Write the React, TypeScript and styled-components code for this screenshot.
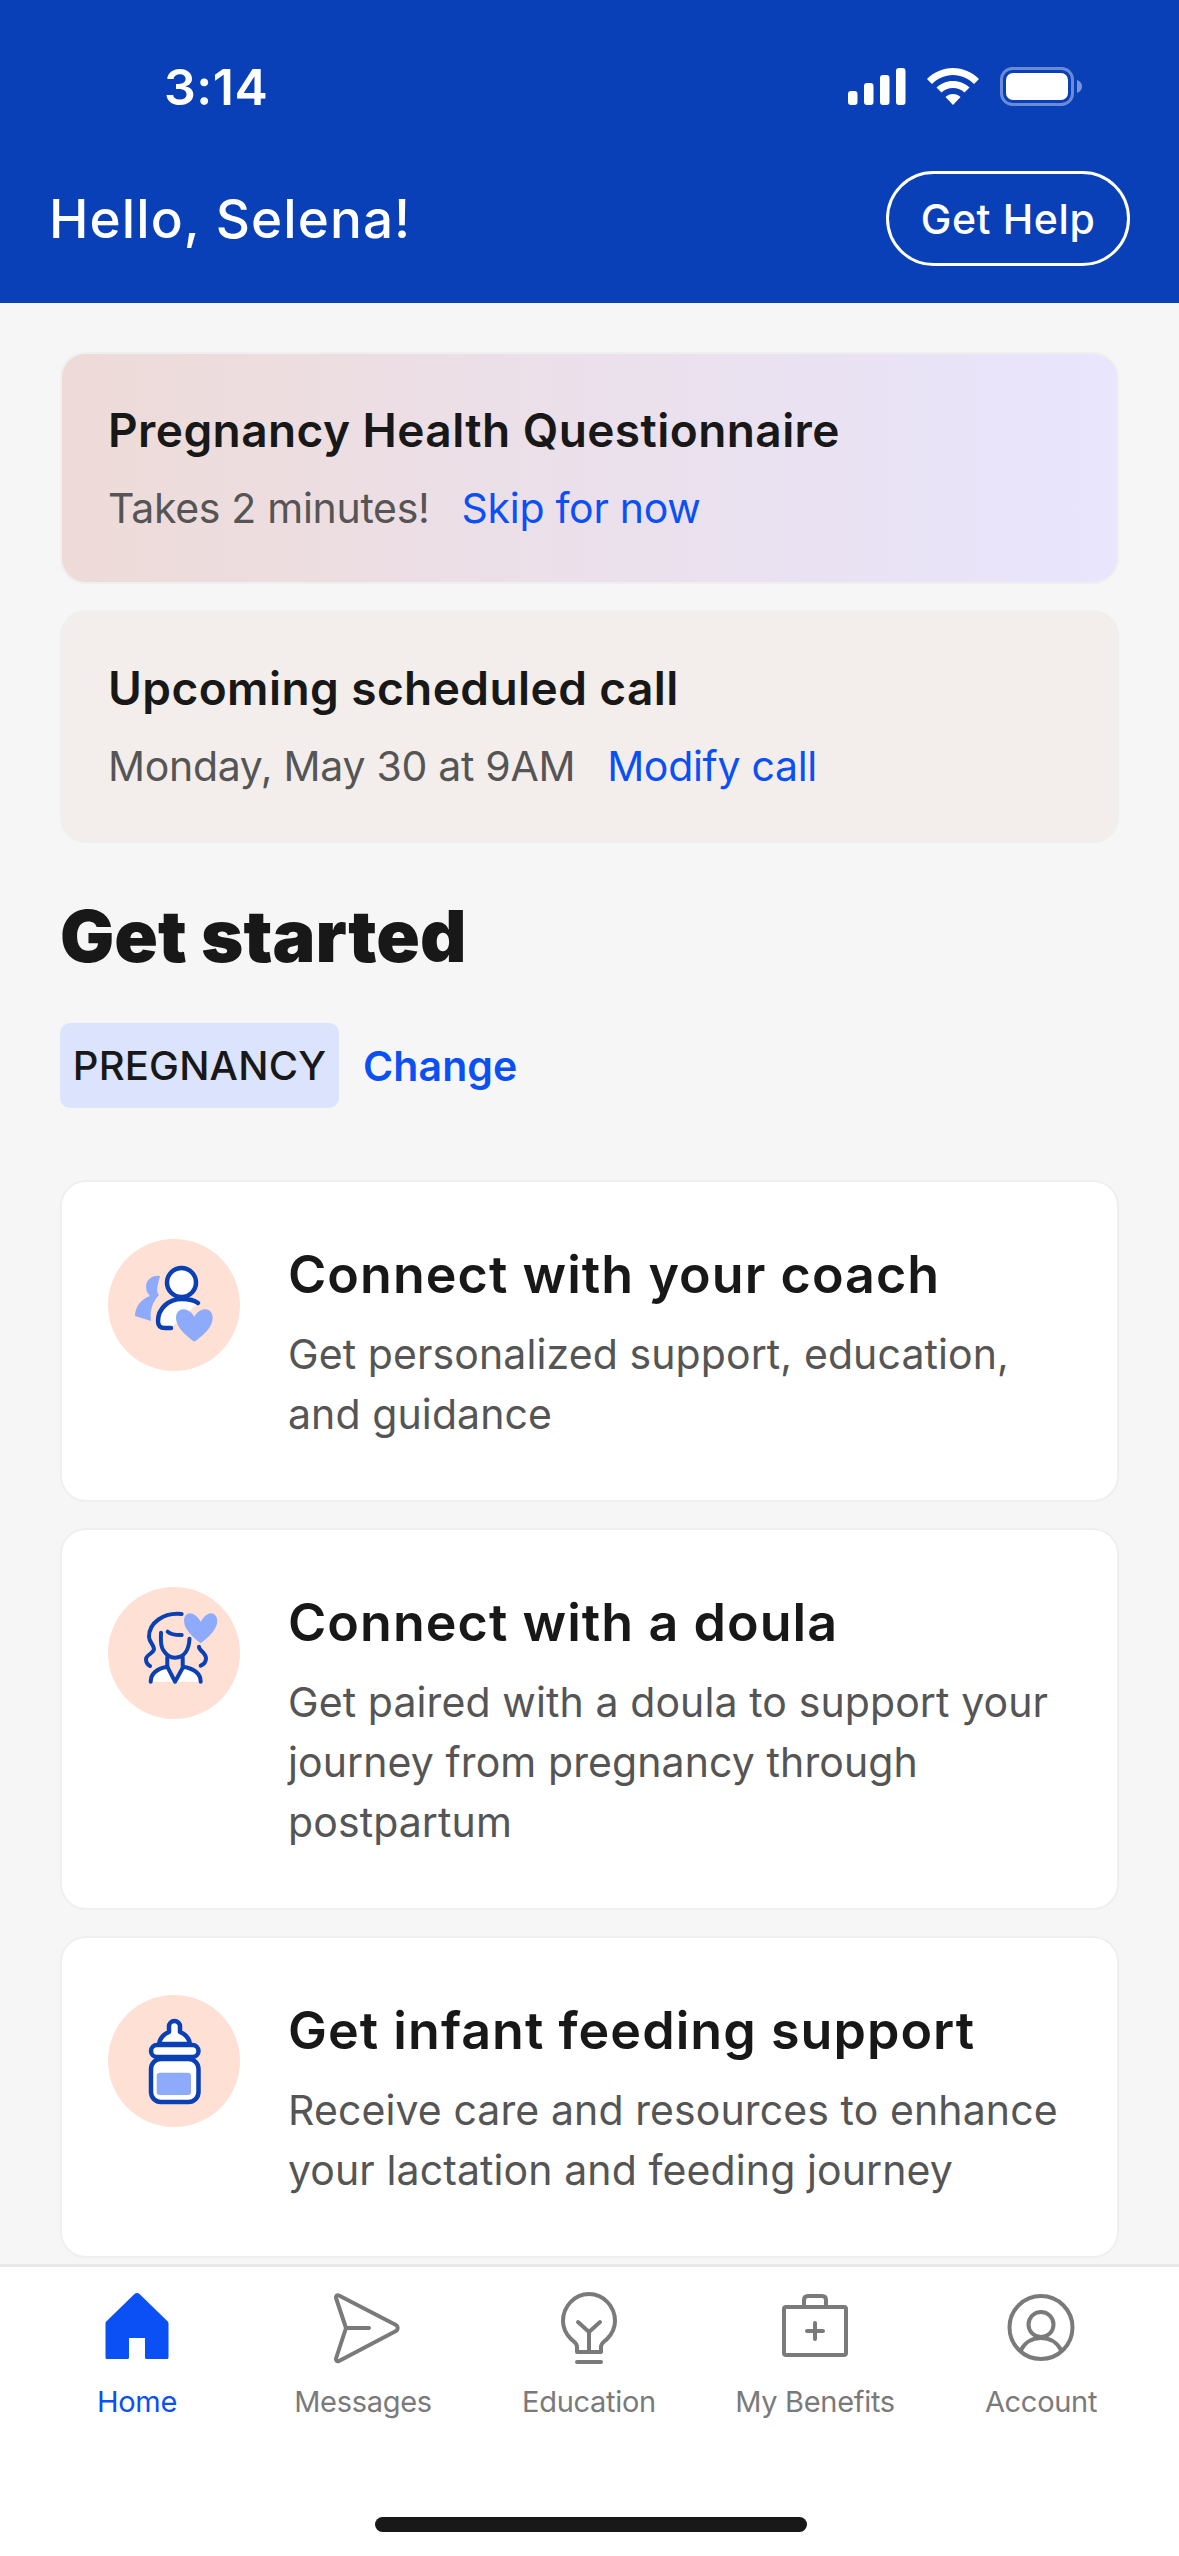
import React from "react";
import styled, { createGlobalStyle } from "styled-components";

const Global = createGlobalStyle`
  html, body { margin: 0; padding: 0; background: #f6f6f6; }
  * { box-sizing: border-box; }
  body { font-family: "Inter", "Noto Sans", "Liberation Sans", sans-serif; }
`;

const Page = styled.div`
  width: 1179px;
  height: 2556px;
  display: flex;
  flex-direction: column;
  overflow: hidden;
  background: #f6f6f6;
`;

const Header = styled.header`
  height: 303px;
  flex: none;
  background: #0940b8;
  color: #fff;
  display: flex;
  flex-direction: column;
`;

const StatusBar = styled.div`
  height: 171px;
  padding: 62px 96px 0 164px;
  display: flex;
  justify-content: space-between;
  align-items: flex-start;
`;

const Clock = styled.span`
  font-size: 50px;
  line-height: 50px;
  font-weight: 600;
  letter-spacing: 0.5px;
`;

const StatusIcons = styled.div`
  display: flex;
  align-items: center;
  padding-top: 5px;
  gap: 21px;
`;

const Greeting = styled.div`
  display: flex;
  justify-content: space-between;
  align-items: center;
  padding: 0 49px 0 49px;
`;

const Hello = styled.h1`
  margin: 0;
  font-size: 53px;
  font-weight: 500;
  letter-spacing: 1.1px;
`;

const HelpButton = styled.button`
  width: 244px;
  height: 95px;
  border-radius: 48px;
  border: 3px solid #fff;
  background: transparent;
  color: #fff;
  font: 500 41px "Inter", sans-serif;
  letter-spacing: 0.6px;
  padding: 0;
`;

const Main = styled.main`
  flex: 1;
  min-height: 0;
  padding: 49px 60px 0;
  display: flex;
  flex-direction: column;
`;

const Banner = styled.section<{ $tone: "gradient" | "plain" }>`
  height: ${(p) => (p.$tone === "gradient" ? "232px" : "233px")};
  padding: 46px 46px 0;
  border: 2px solid #efefef;
  border-radius: 26px;
  margin-bottom: 26px;
  background: ${(p) =>
    p.$tone === "gradient"
      ? "linear-gradient(90deg, #eedbd8 0%, #e8e5fd 100%)"
      : "#f3eeeb"};
`;

const BannerTitle = styled.div`
  font-size: 46px;
  line-height: 60px;
  font-weight: 600;
  color: #181818;
  letter-spacing: 0.43px;
`;

const BannerLine = styled.div`
  margin-top: 18px;
  display: flex;
  gap: 32px;
  font-size: 41px;
  line-height: 60px;
  letter-spacing: -0.3px;
  color: #555;
`;

const LinkText = styled.span`
  color: #0a50f5;
`;

const Heading = styled.h2`
  margin: 22px 0 0;
  font-size: 72px;
  line-height: 90px;
  font-weight: 900;
  color: #181818;
  letter-spacing: 0;
`;

const TagRow = styled.div`
  margin-top: 42px;
  display: flex;
  align-items: center;
  gap: 24px;
`;

const Tag = styled.span`
  width: 279px;
  height: 85px;
  border-radius: 10px;
  background: #dbe3fd;
  color: #181818;
  font-size: 40px;
  font-weight: 500;
  display: flex;
  align-items: center;
  justify-content: center;
  letter-spacing: 0.2px;
`;

const ChangeLink = styled.span`
  color: #0a50f5;
  font-size: 41px;
  font-weight: 600;
  letter-spacing: 0.1px;
`;

const Cards = styled.div`
  margin-top: 72px;
  display: flex;
  flex-direction: column;
  gap: 26px;
`;

const Card = styled.article`
  background: #fff;
  border: 2px solid #efefef;
  border-radius: 26px;
  padding: 56px 46px 56px;
  display: flex;
  gap: 48px;
`;

const IconDisc = styled.svg`
  width: 132px;
  height: 132px;
  flex: none;
  margin-top: 1px;
`;

const CardText = styled.div`
  flex: 1;
  min-width: 0;
`;

const CardTitle = styled.div`
  font-size: 52px;
  line-height: 74px;
  font-weight: 600;
  color: #181818;
  letter-spacing: 1.05px;
  margin-bottom: 12px;
`;

const CardDesc = styled.div`
  font-size: 41px;
  line-height: 60px;
  color: #555;
  letter-spacing: 0.1px;
`;

const TabBar = styled.nav`
  flex: none;
  height: 292px;
  background: #fff;
  border-top: 3px solid #e8e8e8;
  display: flex;
  flex-direction: column;
`;

const Tabs = styled.div`
  display: grid;
  grid-template-columns: repeat(5, 226px);
  padding: 25px 24px 0;
`;

const Tab = styled.div<{ $active?: boolean }>`
  display: flex;
  flex-direction: column;
  align-items: center;
  color: ${(p) => (p.$active ? "#0a50f5" : "#7a7a7a")};
  font-size: 29px;
  letter-spacing: -0.3px;
`;

const TabIcon = styled.svg`
  width: 80px;
  height: 80px;
  display: block;
`;

const TabLabel = styled.span`
  margin-top: 12px;
  line-height: 36px;
`;

const HomeIndicator = styled.div`
  width: 432px;
  height: 15px;
  margin: 97px 0 0 375px;
  border-radius: 8px;
  background: #181818;
`;

const Disc = () => <circle cx="66" cy="66" r="66" fill="#ffe0d4" />;

const DARK = "#0a40b4";
const LIGHT = "#8eabfb";

const CoachIcon = () => (
  <IconDisc viewBox="0 0 132 132">
    <Disc />
    <path d="M52 37c-8-1-14 4-14 11 0 4 2 7 4 9-9 3-15 11-15 20l16 5c-1-9 0-17 8-26-4-4 0-14 1-19z" fill={LIGHT} />
    <path d="M90 64c-4-3-9-4-16-4-14 0-24 10-24 22 0 5 2 7 7 7h6" fill="#fff" stroke={DARK} strokeWidth="4.5" strokeLinecap="round" />
    <circle cx="73.500" cy="43.500" r="14.500" fill="#fff" stroke={DARK} strokeWidth="4.5" />
    <path d="M86.300 77.700C83 72 78 70.300 75 70.300 71 70.300 68 74 68 79 68 88 78 97 86.300 102.700 95 97 104.700 88 104.700 79 104.700 74 101.500 70.300 97.500 70.300 94.500 70.300 89.500 72 86.300 77.700z" fill={LIGHT} />
  </IconDisc>
);

const DoulaIcon = () => (
  <IconDisc viewBox="0 0 132 132">
    <Disc />
    <path d="M43 94.700c0-8 7-13 16.500-15L67 94.700l8.300-15c10 2 17.500 7 17.500 15z" fill="#fff" />
    <g fill="none" stroke={DARK} strokeWidth="4" strokeLinecap="round" strokeLinejoin="round">
      <path d="M73.700 27c-18-2-33 9-32.700 23 .2 5 5 8 5 12 0 4-8 6-8 10 0 3 2 6 4 7" />
      <path d="M53 45.700c0 8-1 12 2 17 3 5 7 8 12 8 10 0 14-9 14.500-19" />
      <path d="M59.700 44.700c3 2.500 8 3.500 14 3.300" />
      <path d="M59.300 70.300v9.500M74.700 70.300v9.500" />
      <path d="M42.700 94.700c0-8 6-13 16.600-15L67 94.700l8.300-15c11 2 17.400 7 17.400 15" />
      <path d="M91 59.700c0 4 7 6 7 11.600 0 3-2 6-5.300 7.400" />
    </g>
    <path d="M92.700 34.700C89.500 29 85 26.300 82 26.300 78.500 26.300 76 29.500 76 34 76 42 85 50.500 92.700 56.300 100.500 50.500 109.300 42 109.300 34 109.300 29.500 106.500 26.300 103 26.300 100 26.300 96 29 92.700 34.700z" fill={LIGHT} />
  </IconDisc>
);

const BottleIcon = () => (
  <IconDisc viewBox="0 0 132 132">
    <Disc />
    <g fill="#fff" stroke={DARK} strokeWidth="4.500" strokeLinejoin="round">
      <path d="M51 49c1-6 5-10 10-12v-5.500a5.500 5.500 0 0 1 11 0V37c5 2 9 6 10 12z" />
      <rect x="43" y="50" width="47.500" height="12" rx="6" />
      <rect x="43" y="64" width="47.500" height="43" rx="10" />
    </g>
    <rect x="48.700" y="77.700" width="34.300" height="22.300" rx="3" fill={LIGHT} />
  </IconDisc>
);

const HomeTab = () => (
  <TabIcon viewBox="0 0 80 80">
    <path d="M10 67a1.500 1.500 0 0 1-1.500-1.500V31.500c0-1 .3-1.500 1-2.200L37.500 2c1.500-1.500 3.500-1.500 5 0l28 27.300c.7.700 1 1.200 1 2.200v34a1.500 1.500 0 0 1-1.500 1.500H49.500a1.500 1.500 0 0 1-1.500-1.500V46H32v19.500a1.500 1.500 0 0 1-1.500 1.500z" fill="currentColor" />
  </TabIcon>
);

const stroke = { fill: "none", stroke: "currentColor", strokeWidth: 4, strokeLinecap: "round", strokeLinejoin: "round" } as const;

const MessagesTab = () => (
  <TabIcon viewBox="0 0 80 80">
    <path d="M16 3.500 L73 33 a3.500 3.500 0 0 1 0 6 L16 69 c-2 1-3.500-.5-3-2.500 L23 36 13 6 c-.5-2 1-3.500 3-2.500z M23 36H46" {...stroke} />
  </TabIcon>
);

const EducationTab = () => (
  <TabIcon viewBox="0 0 80 80">
    <path d="M28 60v-5c0-4-3-5-6-8-5-5-8-11-8-18C14 15 25 2 40 2s26 13 26 27c0 7-3 13-8 18-3 3-6 4-6 8v5z" {...stroke} />
    <path d="M40 60V40M29 30l11 10 11-10M28 70h24" {...stroke} />
  </TabIcon>
);

const BenefitsTab = () => (
  <TabIcon viewBox="0 0 80 80">
    <rect x="9" y="15" width="62" height="48" rx="2" {...stroke} />
    <path d="M29 15v-7c0-2.500 1.500-4 4-4h14c2.500 0 4 1.500 4 4v7M40 31v16M32 39h16" {...stroke} />
  </TabIcon>
);

const AccountTab = () => (
  <TabIcon viewBox="0 0 80 80">
    <circle cx="40" cy="35.500" r="31.500" {...stroke} />
    <circle cx="40" cy="32.500" r="12.500" {...stroke} />
    <path d="M20 58c4-8 12-12 20-12s16 4 20 12" {...stroke} />
  </TabIcon>
);

const Signal = () => (
  <svg width="58" height="37" viewBox="0 0 58 37">
    <rect x="0" y="23" width="9.500" height="14" rx="3" fill="#fff" />
    <rect x="16" y="15" width="9.500" height="22" rx="3" fill="#fff" />
    <rect x="32" y="7" width="9.500" height="30" rx="3" fill="#fff" />
    <rect x="48" y="0" width="9.500" height="37" rx="3" fill="#fff" />
  </svg>
);

const Wifi = () => (
  <svg width="52" height="37" viewBox="0 0 52 37" fill="#fff">
    <path d="M26 0c10 0 19 4 26 11l-5 5c-5.500-5.500-13-9-21-9S10.500 10.500 5 16l-5-5C7 4 16 0 26 0z" />
    <path d="M26 13c6.500 0 12 2.500 16.500 6.500l-5 5c-3-3-7-4.500-11.500-4.500s-8.500 1.500-11.500 4.500l-5-5C14 15.500 19.500 13 26 13z" />
    <path d="M26 26c3 0 5.500 1 7.500 3L26 37l-7.500-8c2-2 4.500-3 7.500-3z" />
  </svg>
);

const Battery = () => (
  <svg width="83" height="39" viewBox="0 0 83 39">
    <rect x="1.500" y="1.500" width="71" height="36" rx="11" fill="none" stroke="#fff" strokeOpacity="0.4" strokeWidth="3" />
    <rect x="6" y="6" width="62" height="27" rx="7" fill="#fff" />
    <path d="M77 13c3 1 5 3.500 5 6.500S80 25 77 26z" fill="#fff" fillOpacity="0.45" />
  </svg>
);

export default function App() {
  return (
    <Page>
      <Global />
      <Header>
        <StatusBar>
          <Clock>3:14</Clock>
          <StatusIcons>
            <Signal />
            <Wifi />
            <Battery />
          </StatusIcons>
        </StatusBar>
        <Greeting>
          <Hello>Hello, Selena!</Hello>
          <HelpButton>Get Help</HelpButton>
        </Greeting>
      </Header>
      <Main>
        <Banner $tone="gradient">
          <BannerTitle>Pregnancy Health Questionnaire</BannerTitle>
          <BannerLine>
            <span>Takes 2 minutes!</span>
            <LinkText>Skip for now</LinkText>
          </BannerLine>
        </Banner>
        <Banner $tone="plain">
          <BannerTitle>Upcoming scheduled call</BannerTitle>
          <BannerLine>
            <span>Monday, May 30 at 9AM</span>
            <LinkText>Modify call</LinkText>
          </BannerLine>
        </Banner>
        <Heading>Get started</Heading>
        <TagRow>
          <Tag>PREGNANCY</Tag>
          <ChangeLink>Change</ChangeLink>
        </TagRow>
        <Cards>
          <Card>
            <CoachIcon />
            <CardText>
              <CardTitle>Connect with your coach</CardTitle>
              <CardDesc>Get personalized support, education, and guidance</CardDesc>
            </CardText>
          </Card>
          <Card>
            <DoulaIcon />
            <CardText>
              <CardTitle>Connect with a doula</CardTitle>
              <CardDesc>Get paired with a doula to support your journey from pregnancy through postpartum</CardDesc>
            </CardText>
          </Card>
          <Card>
            <BottleIcon />
            <CardText>
              <CardTitle>Get infant feeding support</CardTitle>
              <CardDesc>Receive care and resources to enhance your lactation and feeding journey</CardDesc>
            </CardText>
          </Card>
        </Cards>
      </Main>
      <TabBar>
        <Tabs>
          <Tab $active><HomeTab /><TabLabel>Home</TabLabel></Tab>
          <Tab><MessagesTab /><TabLabel>Messages</TabLabel></Tab>
          <Tab><EducationTab /><TabLabel>Education</TabLabel></Tab>
          <Tab><BenefitsTab /><TabLabel>My Benefits</TabLabel></Tab>
          <Tab><AccountTab /><TabLabel>Account</TabLabel></Tab>
        </Tabs>
        <HomeIndicator />
      </TabBar>
    </Page>
  );
}
